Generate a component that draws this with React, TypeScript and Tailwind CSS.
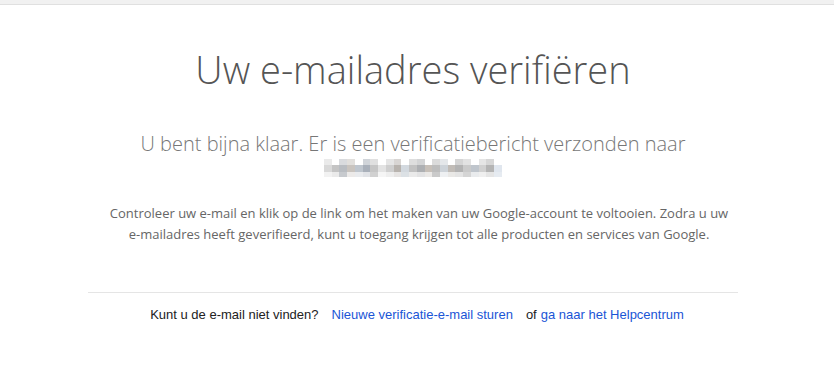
const blur = [
  "#d9d9d9", "#c4c4c4", "#b9bdc2", "#c9c4bf", "#bfc6ce", "#a9b0ba", "#c6c6c6", "#e3e3e3",
  "#cfcfcf", "#b8b3ae", "#d3d9df", "#c2c2c2", "#aeb0b3", "#c7c0b9", "#bdbdbd", "#cdd3d9",
  "#c1bcb7", "#b3b3b3", "#cacaca", "#bfc5cc", "#d0d0d0", "#b4b4b4", "#e0e6ee",
];

function BlurredEmail() {
  return (
    <div className="flex flex-col mx-auto w-[178px]">
      <div className="flex h-[6px]">
        {blur.map((c, i) => (
          <div key={i} className="flex-1" style={{ backgroundColor: i % 3 === 1 ? "#ffffff" : c, opacity: 0.55 }} />
        ))}
      </div>
      <div className="flex h-[7px]">
        {blur.map((c, i) => (
          <div key={i} className="flex-1" style={{ backgroundColor: c }} />
        ))}
      </div>
      <div className="flex h-[5px]">
        {blur.map((c, i) => (
          <div key={i} className="flex-1" style={{ backgroundColor: c, opacity: i % 4 === 2 ? 0.8 : 0.35 }} />
        ))}
      </div>
    </div>
  );
}

export default function App() {
  return (
    <div className="min-h-[392px] bg-white font-['Open_Sans',sans-serif]">
      <div className="h-[5px] bg-[#f1f1f1] border-b border-[#e0e0e0]" />

      <div className="w-[650px] ml-[88px]">
        <h1 className="mt-[40px] text-center text-[38px] leading-[48px] font-light text-[#555555]">
          Uw e-mailadres verifiëren
        </h1>

        <div className="mt-[38px] text-center text-[20px] leading-[26px] font-light text-[#777777]">
          U bent bijna klaar. Er is een verificatiebericht verzonden naar
        </div>
        <div className="mt-[2px]">
          <BlurredEmail />
        </div>

        <p className="mt-[26px] pl-[12px] text-center text-[13px] leading-[21px] text-[#666666]">
          Controleer uw e-mail en klik op de link om het maken van uw Google-account te voltooien. Zodra u uw
          <br />
          e-mailadres heeft geverifieerd, kunt u toegang krijgen tot alle producten en services van Google.
        </p>

        <div className="mt-[47px] border-t border-[#e5e5e5]" />

        <div className="mt-[12px] pl-[8px] flex justify-center font-['Liberation_Sans',Arial,sans-serif] text-[13px] text-[#222222]">
          <span>Kunt u de e-mail niet vinden?</span>
          <a href="#" className="ml-[13px] text-[#1a55d6]">Nieuwe verificatie-e-mail sturen</a>
          <span className="ml-[13px]">of</span>
          <a href="#" className="ml-[4px] text-[#1a55d6]">ga naar het Helpcentrum</a>
        </div>
      </div>
    </div>
  );
}
